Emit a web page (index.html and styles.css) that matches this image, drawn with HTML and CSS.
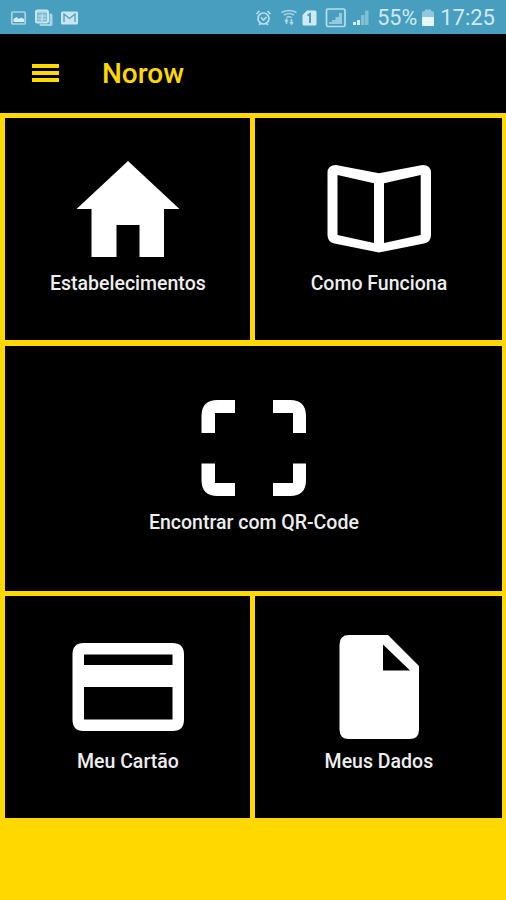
FILE: index.html
```html
<!DOCTYPE html>
<html lang="pt-BR">
<head>
    <meta charset="UTF-8">
    <meta name="viewport" content="width=device-width, initial-scale=1.0">
    <title>Norow</title>
    <link rel="stylesheet" href="styles.css">
</head>
<body>
    <!-- Barra de status -->
    <div class="status-bar">
        <svg class="status-icons" width="70" height="20" viewBox="0 0 70 20">
            <rect x="1.8" y="4" width="13.4" height="12" rx="1" fill="none" stroke="#a9d5e5" stroke-width="1.7"/>
            <path d="M3.5 14v-3l3-2 2.500 2 2-1.500 3 1.500v3z" fill="#d6edf5"/>
            <path d="M39.500 5.500H41q1.500 0 1.500 1.500v9.500q0 1.500-1.500 1.500H31q-1.500 0-1.500-1.500V16h10z" fill="#a9d5e5"/>
            <rect x="26" y="2.500" width="12" height="12" rx="1.500" fill="#7fbdd3" stroke="#c8e6f0" stroke-width="2"/>
            <path d="M26 4h12M28 8h8M28 11h8M32 6v7" stroke="#c8e6f0" stroke-width="1.200"/>
            <rect x="51" y="3.500" width="17" height="13" rx="1.500" fill="#c8e6f0"/>
            <path d="M54 14V6l5.500 4.500L65 6v8" fill="none" stroke="#4b9fbf" stroke-width="1.300"/>
        </svg>
        <div class="status-right">
            <svg width="116" height="20" viewBox="0 0 116 20">
                <g fill="none" stroke="#b9dfec" stroke-width="1.700">
                    <circle cx="9.500" cy="10.500" r="5.500"/>
                    <path d="M2.500 6l3-3M16.500 6l-3-3M5 17l2-2M14 17l-2-2M7 9.500L9.500 12l3-3"/>
                </g>
                <g fill="none" stroke="#a9d5e5" stroke-width="1.700">
                    <path d="M27.500 4.500q7.500-4 15 0M30 7q5-3 10 0M32.500 9.500q2.500-1.500 5 0"/>
                    <path d="M32.500 11v5M37.500 11v5M31 13.500l1.500-2 1.500 2M36 14l1.500 2 1.500-2"/>
                </g>
                <path d="M53 2.500h8q1.500 0 1.500 1.500v12q0 1.500-1.500 1.500H50q-1.500 0-1.500-1.500V7z" fill="#d0eaf3"/>
                <path d="M53.500 7.500l2.500-1.500v9" fill="none" stroke="#4b9fbf" stroke-width="2"/>
                <rect x="72.500" y="1" width="18.500" height="17.500" rx="1.500" fill="none" stroke="#b9dfec" stroke-width="1.700"/>
                <path d="M75 16v-2h3v2zM78 16v-4h3.500v4zM81.500 16V9H85v7zM85 16V5h3v11z" fill="#94cade"/>
                <path d="M99 17v-3h3v3zM103 17v-5h3v5z" fill="#d6edf5"/>
                <path d="M107 17V7h3.500v10zM111 17V2.500h3.500V17z" fill="#82bed4"/>
            </svg>
            <span class="battery-text">55%</span>
            <svg class="battery" width="12" height="18" viewBox="0 0 12 18">
                <path d="M0 8V3.500Q0 2 2 2h1V.500h6V2h1q2 0 2 1.500V8z" fill="#91c7db"/>
                <path d="M0 8h12v8q0 1-1 1H1q-1 0-1-1z" fill="#e6f6fb"/>
            </svg>
            <span class="clock">17:25</span>
        </div>
    </div>

    <!-- Cabeçalho -->
    <header class="header">
        <div class="menu-btn">
            <span></span>
            <span></span>
            <span></span>
        </div>
        <h1>Norow</h1>
    </header>

    <!-- Menu principal -->
    <main class="menu">
        <div class="item">
            <svg class="icon" viewBox="0 0 120 112">
                <path d="M60 11L111.500 59H96v48H71.500V75h-23v32h-25V59h-15z"/>
            </svg>
            <p>Estabelecimentos</p>
        </div>
        <div class="item">
            <svg class="icon" viewBox="0 0 120 112">
                <path fill-rule="evenodd" d="M17 15L60 23.200 103.500 15q8.500 0 8.500 8v62q0 7-7 8.500L60 102.500 15.500 93.500q-7-1.500-7-8.500V23q0-8 8.500-8zM18.500 25v60l36.500 8V33.200zM101.700 25L65 33.200V93l36.700-8z"/>
            </svg>
            <p>Como Funciona</p>
        </div>
        <div class="item item-wide">
            <svg class="icon" viewBox="0 0 120 112">
                <path d="M7.500 44V27q0-16 16-16H41v13H21v20zM79 11h17q16 0 16 16v17H99V24H79zM7.500 74.500H21V94h20v13H23.500q-16 0-16-16zM99 74.500h13V91q0 16-16 16H79V94h20z"/>
            </svg>
            <p>Encontrar com QR-Code</p>
        </div>
        <div class="item">
            <svg class="icon" viewBox="0 0 120 112">
                <path fill-rule="evenodd" d="M15.500 15h89Q116 15 116 26.500v65q0 11.500-11.500 11.500h-89Q4.500 103 4.500 91.500v-65Q4.500 15 15.500 15zM16 26.500V37h88.500V26.500zM16 59v32.500h88.500V59z"/>
            </svg>
            <p>Meu Cartão</p>
        </div>
        <div class="item">
            <svg class="icon" viewBox="0 0 120 112">
                <path fill-rule="evenodd" d="M30 7h39l31 31v63.500q0 9.500-9.500 9.500H30q-9.500 0-9.500-9.500v-85Q20.500 7 30 7zM64 16.500v26h27z"/>
            </svg>
            <p>Meus Dados</p>
        </div>
    </main>
</body>
</html>
```
FILE: styles.css
```css
:root {
    --amarelo: #FFD800;
    --preto: #000;
    --azul: #489EBE;
}

* {
    box-sizing: border-box;
}

body {
    margin: 0;
    min-height: 100vh;
    background: var(--amarelo);
    font-family: Roboto, sans-serif;
}

svg {
    display: block;
}

.status-bar {
    height: 34px;
    padding: 1px 11px 0 10px;
    background: var(--azul);
    display: flex;
    align-items: center;
    justify-content: space-between;
    color: #d0eaf3;
    font-size: 22px;
}

.status-right {
    display: flex;
    align-items: center;
}

.battery-text {
    margin-left: 7px;
    font-size: 21.5px;
}

.battery {
    margin: 0 6px 0 5px;
}

.header {
    height: 79px;
    padding: 0 32px;
    background: var(--preto);
    display: flex;
    align-items: center;
}

.menu-btn {
    width: 27px;
    margin: 0 43px 1px 0;
    display: flex;
    flex-direction: column;
    gap: 3px;
}

.menu-btn span {
    height: 4px;
    background: var(--amarelo);
}

h1 {
    margin: 0;
    color: var(--amarelo);
    font-size: 28px;
    font-weight: 500;
}

.menu {
    display: grid;
    grid-template-columns: 245px 247px;
    grid-template-rows: 222px 245px 222px;
    gap: 5.5px 5px;
    padding: 5px 4px 0 5.4px;
}

.item {
    background: var(--preto);
    color: #eee;
    padding-bottom: 12px;
    display: flex;
    flex-direction: column;
    align-items: center;
    justify-content: center;
}

.item-wide {
    grid-column: span 2;
}

.icon {
    width: 120px;
    height: 112px;
    fill: #fff;
}

.item p {
    margin: 10px 0 0;
    font-size: 19.5px;
    line-height: 24px;
    font-weight: 500;
}
```
